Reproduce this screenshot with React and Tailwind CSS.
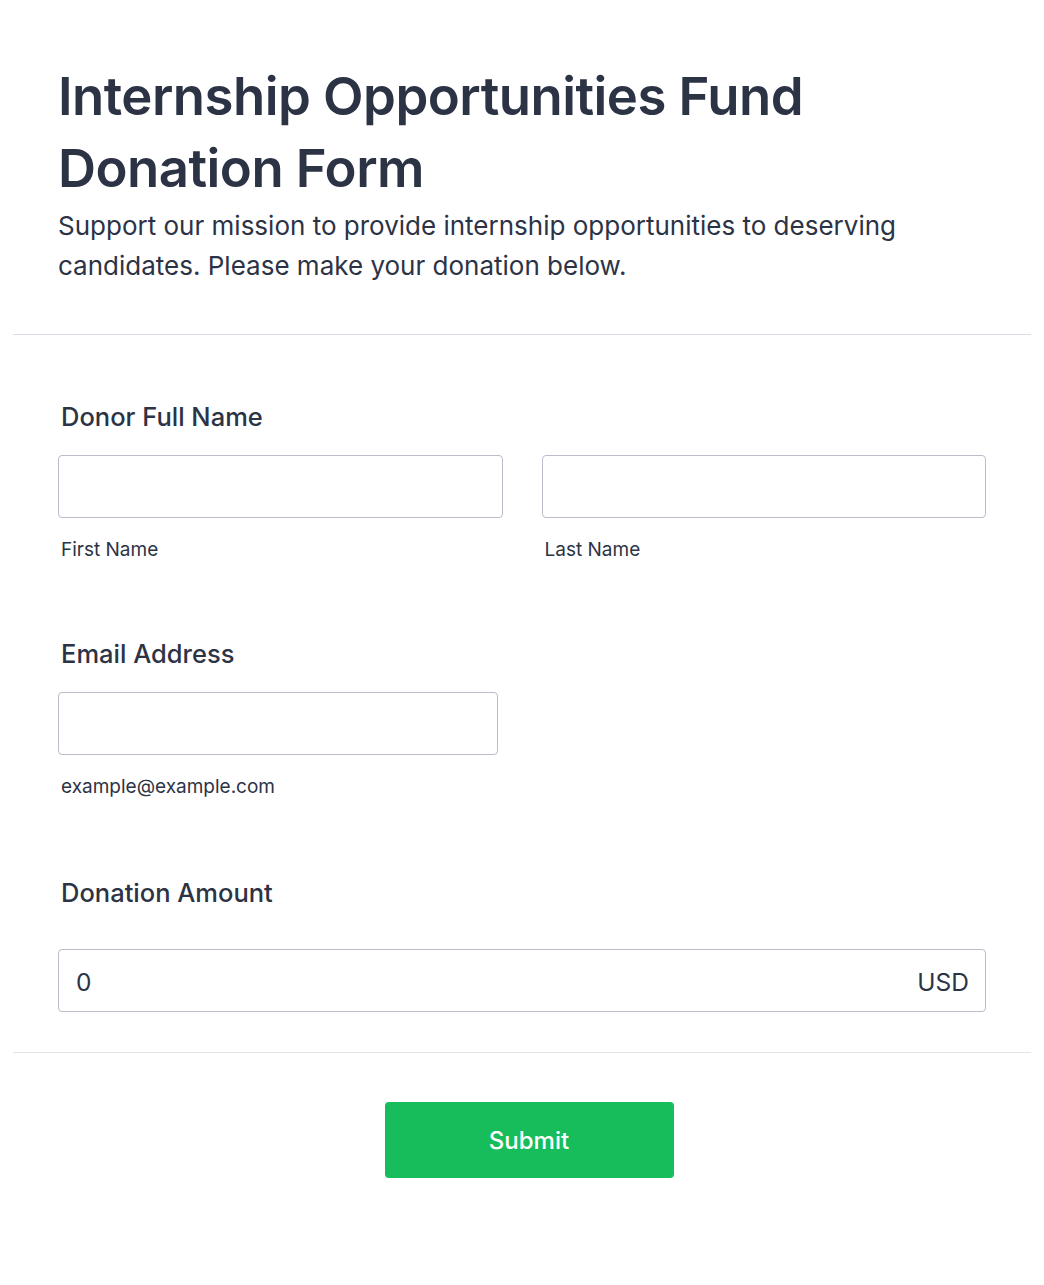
export default function App() {
  return (
    <div className="min-h-[1285px] bg-white px-[13px] font-['Inter',sans-serif] text-[#2c3345]">
      <header className="px-[45px] pb-[48px] pt-[60px]">
        <h1 className="text-[52.7px] font-semibold leading-[72px] tracking-[-0.01em]">
          Internship Opportunities Fund Donation Form
        </h1>
        <p className="mt-[2px] text-[26px] leading-[40px]">
          Support our mission to provide internship opportunities to deserving candidates. Please make your donation below.
        </p>
      </header>

      <div className="border-t border-[#dadde5]" />

      <form className="px-[45px] pt-[64px]" onSubmit={(e) => e.preventDefault()}>
        <div>
          <label className="block pl-[3px] text-[25.5px] leading-[36px] font-medium">Donor Full Name</label>
          <div className="mt-[20px] flex gap-[39px]">
            <div className="flex-1">
              <input className="block h-[63px] w-full rounded-[4px] border border-[#b8bdc9] px-4 text-[24px] outline-none" />
              <span className="mt-[20px] block pl-[3px] text-[19px] leading-[23px]">First Name</span>
            </div>
            <div className="flex-1">
              <input className="block h-[63px] w-full rounded-[4px] border border-[#b8bdc9] px-4 text-[24px] outline-none" />
              <span className="mt-[20px] block pl-[3px] text-[19px] leading-[23px]">Last Name</span>
            </div>
          </div>
        </div>

        <div className="mt-[75px]">
          <label className="block pl-[3px] text-[25.5px] leading-[36px] font-medium">Email Address</label>
          <div className="mt-[20px] w-[440px]">
            <input className="block h-[63px] w-full rounded-[4px] border border-[#b8bdc9] px-4 text-[24px] outline-none" />
            <span className="mt-[20px] block pl-[3px] text-[19px] leading-[23px]">example@example.com</span>
          </div>
        </div>

        <div className="mt-[77px]">
          <label className="block pl-[3px] text-[25.5px] leading-[36px] font-medium">Donation Amount</label>
          <div className="mt-[38px] flex h-[63px] items-center rounded-[4px] border border-[#b8bdc9] pl-[17px] pr-[16px] pt-[3px] text-[24.5px]">
            <span className="flex-1">0</span>
            <span>USD</span>
          </div>
        </div>
      </form>

      <div className="mt-[40px] border-t border-[#e3e5ea]" />

      <div className="flex justify-center pl-[14px] pt-[49px]">
        <button type="button" className="h-[76px] w-[289px] rounded-[4px] bg-[#18bd5b] pt-[2px] text-[24px] font-medium text-white">
          Submit
        </button>
      </div>
    </div>
  );
}
